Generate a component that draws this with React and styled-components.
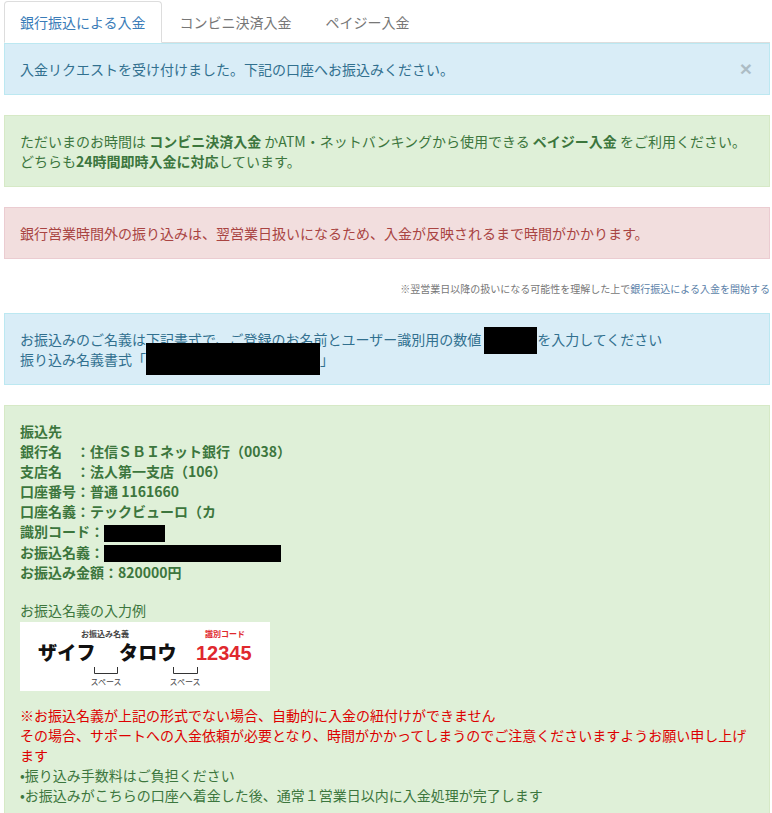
import styled, { createGlobalStyle, css } from 'styled-components';

const GlobalStyle = createGlobalStyle`
	body {
		margin: 0;
		background: #fff;
		font-family: 'Noto Sans CJK JP', 'Noto Sans', sans-serif;
		font-size: 14px;
		line-height: 20px;
		color: #333;
	}
`;

const variants = {
	info: css`
		background-color: #d9edf7;
		border-color: #bce8f1;
		color: #31708f;
	`,
	success: css`
		background-color: #dff0d8;
		border-color: #d6e9c6;
		color: #3c763d;
	`,
	danger: css`
		background-color: #f2dede;
		border-color: #ebccd1;
		color: #a94442;
	`,
};

function NameExample() {
	return (
		<ExampleBox>
			<svg width="250" height="69" viewBox="0 0 250 69">
				<rect width="250" height="69" fill="#fff" />
				<text x="85" y="15" fontSize="8" fontWeight="700" fill="#444" textAnchor="middle">
					お振込み名義
				</text>
				<text x="205" y="15" fontSize="8" fontWeight="700" fill="#e0282e" textAnchor="middle">
					識別コード
				</text>
				<text x="18" y="38" fontSize="19" fontWeight="900" fill="#111" letterSpacing="0.3">
					ザイフ
				</text>
				<text x="99" y="38" fontSize="19" fontWeight="900" fill="#111" letterSpacing="0.3">
					タロウ
				</text>
				<text x="176" y="38" fontSize="20" fontWeight="900" fill="#e0282e" fontFamily="'Liberation Sans', sans-serif">
					12345
				</text>
				<path d="M74.5 45v6.5h23V45" fill="none" stroke="#333" strokeWidth="1" />
				<path d="M153.5 45v6.5h24V45" fill="none" stroke="#333" strokeWidth="1" />
				<text x="86" y="63" fontSize="8" fill="#444" textAnchor="middle">
					スペース
				</text>
				<text x="165" y="63" fontSize="8" fill="#444" textAnchor="middle">
					スペース
				</text>
			</svg>
		</ExampleBox>
	);
}

function App() {
	const tabs = ['銀行振込による入金', 'コンビニ決済入金', 'ペイジー入金'];

	return (
		<Page>
			<GlobalStyle />
			<Tabs>
				{tabs.map((tab, index) => (
					<Tab key={tab} $active={index === 0}>
						{tab}
					</Tab>
				))}
			</Tabs>

			<Alert $variant="info" $dismissable>
				入金リクエストを受け付けました。下記の口座へお振込みください。
				<Close type="button">×</Close>
			</Alert>

			<Alert $variant="success">
				ただいまのお時間は <b>コンビニ決済入金</b> かATM・ネットバンキングから使用できる{' '}
				<b>ペイジー入金</b> をご利用ください。
				<br />
				どちらも<b>24時間即時入金に対応</b>しています。
			</Alert>

			<Alert $variant="danger">
				銀行営業時間外の振り込みは、翌営業日扱いになるため、入金が反映されるまで時間がかかります。
			</Alert>

			<Note>
				※翌営業日以降の扱いになる可能性を理解した上で<NoteLink>銀行振込による入金を開始する</NoteLink>
			</Note>

			<Alert $variant="info" $gap={20}>
				お振込みのご名義は下記書式で、ご登録のお名前とユーザー識別用の数値
				<Redact $w={53} $h={27} $top={-2} $left={3} />
				を入力してください
				<br />
				振り込み名義書式「<Redact $w={174} $h={32} $top={-6} />」
			</Alert>

			<Alert $variant="success">
				<Account>
					<div>振込先</div>
					<div>銀行名　：住信ＳＢＩネット銀行（0038）</div>
					<div>支店名　：法人第一支店（106）</div>
					<div>口座番号：普通 1161660</div>
					<div>口座名義：テックビューロ（カ</div>
					<div>
						識別コード：<InlineBlack $w={61} />
					</div>
					<div>
						お振込名義：<InlineBlack $w={177} />
					</div>
					<div>お振込み金額：820000円</div>
				</Account>
				<ExampleTitle>お振込名義の入力例</ExampleTitle>
				<NameExample />
				<Warning>
					※お振込名義が上記の形式でない場合、自動的に入金の紐付けができません
					<br />
					その場合、サポートへの入金依頼が必要となり、時間がかかってしまうのでご注意くださいますようお願い申し上げます
				</Warning>
				<div>•振り込み手数料はご負担ください</div>
				<div>•お振込みがこちらの口座へ着金した後、通常１営業日以内に入金処理が完了します</div>
			</Alert>
		</Page>
	);
}

const Page = styled.div`
	padding: 1px 2px 0 4px;
`;

const Tabs = styled.ul`
	display: flex;
	margin: 0;
	padding: 0;
	list-style: none;
	border-bottom: 1px solid #ddd;
`;

const Tab = styled.li`
	margin: 0 2px -1px 0;
	padding: 10px 15px;
	border: 1px solid transparent;
	border-radius: 4px 4px 0 0;
	color: #777;
	cursor: pointer;

	${(p) =>
		p.$active &&
		css`
			color: #3a7cb8;
			background: #fff;
			border-color: #ddd #ddd transparent;
		`}
`;

const Alert = styled.div`
	position: relative;
	margin-bottom: 20px;
	padding: 15px;
	padding-right: ${(p) => (p.$dismissable ? '35px' : '15px')};
	border: 1px solid transparent;
	${(p) => variants[p.$variant]}
`;

const Close = styled.button`
	position: absolute;
	top: 14px;
	right: 17px;
	padding: 0;
	border: 0;
	background: transparent;
	font-family: 'Liberation Sans', Arial, sans-serif;
	font-size: 21px;
	font-weight: bold;
	line-height: 21px;
	color: #000;
	opacity: 0.2;
	cursor: pointer;
`;

const Note = styled.div`
	margin: -17px 0 17px;
	padding-top: 20px;
	text-align: right;
	font-size: 10px;
	line-height: 14px;
	color: #777;
`;

const NoteLink = styled.span`
	color: #5b7fa8;
`;

const Redact = styled.span`
	display: inline-block;
	width: ${(p) => p.$w}px;
	height: ${(p) => p.$h}px;
	margin-top: ${(p) => p.$top}px;
	margin-bottom: ${(p) => 20 - p.$h - p.$top}px;
	margin-left: ${(p) => p.$left || 0}px;
	vertical-align: top;
	background: #000;
`;

const InlineBlack = styled.span`
	display: inline-block;
	width: ${(p) => p.$w}px;
	height: 17px;
	vertical-align: middle;
	background: #000;
`;

const Account = styled.div`
	font-weight: bold;
`;

const ExampleTitle = styled.div`
	margin-top: 18px;
`;

const ExampleBox = styled.div`
	margin-top: 2px;
	width: 250px;
	height: 69px;

	svg {
		display: block;
		font-family: 'Noto Sans CJK JP', sans-serif;
	}
`;

const Warning = styled.div`
	margin-top: 14px;
	color: #dd0000;
`;

export default App;
